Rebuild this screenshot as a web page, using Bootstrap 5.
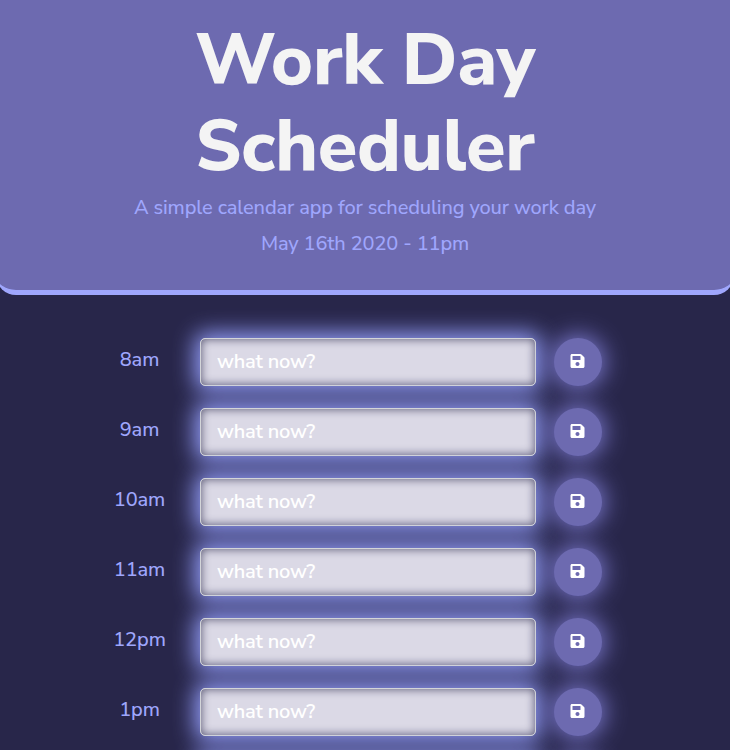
<!DOCTYPE html>
<html lang="en">
<head>
<meta charset="utf-8">
<meta name="viewport" content="width=device-width, initial-scale=1">
<title>Work Day Scheduler</title>
<link href="https://cdn.jsdelivr.net/npm/bootstrap@5.3.0/dist/css/bootstrap.min.css" rel="stylesheet">
<style>
html{overflow:hidden}
body{background:#28264a;font-family:"Nunito Sans",Nunito,Lato,sans-serif;font-size:20px;font-weight:500;color:#9fa6fd;overflow:hidden;height:750px}
.page-head{background:#6d6ab0;border-bottom:5px solid #9fa6fd;border-radius:0 0 20px 20px;height:295px;margin:0 -4px 43px;padding-top:17px}
.page-head h1{font-size:72px;font-weight:800;line-height:86px;letter-spacing:-.3px;color:#f4f4f4;margin-bottom:4px}
.page-head p{line-height:30px;margin-bottom:6px;letter-spacing:-.14px}
.slots{width:522px;height:412px;margin-left:80px;gap:22px}
.hour{width:119px;margin-right:1px;line-height:30px;padding-bottom:4px;letter-spacing:-.1px}
.slots .task{width:336px;height:48px;padding:5px 16px 7px;font-size:20px;color:#fff;background:#dbd9e6;border:1px solid #d3d5d9;border-radius:5px;box-shadow:0 0 22px 5px #949efa,inset 0 0 10px #55536f}
.slots .task::placeholder{color:#fff;opacity:1;font-weight:600;letter-spacing:-.2px}
.save{width:48px;height:48px;margin-left:18px;background:#6d6ab0;box-shadow:0 0 25px 2px #8482dc}
.save svg{width:15px;height:16px;margin-right:1px;margin-top:-2px}
</style>
</head>
<body>
<header class="page-head text-center">
<h1>Work Day<br>Scheduler</h1>
<p>A simple calendar app for scheduling your work day</p>
<p>May 16th 2020 - 11pm</p>
</header>
<svg class="d-none"><symbol id="disk" viewBox="0 0 448 512"><path fill="#fff" d="M433.941 129.941l-83.882-83.882A48 48 0 0 0 316.118 32H48C21.49 32 0 53.49 0 80v352c0 26.51 21.49 48 48 48h352c26.51 0 48-21.49 48-48V163.882a48 48 0 0 0-14.059-33.941zM224 416c-35.346 0-64-28.654-64-64 0-35.346 28.654-64 64-64s64 28.654 64 64c0 35.346-28.654 64-64 64zm96-304.52V212c0 6.627-5.373 12-12 12H76c-6.627 0-12-5.373-12-12V108c0-6.627 5.373-12 12-12h228.52c3.183 0 6.235 1.264 8.485 3.515l3.48 3.48A11.996 11.996 0 0 1 320 111.48z"/></symbol></svg>
<main class="slots d-flex flex-column">
<div class="d-flex align-items-center"><div class="hour text-center">8am</div><input class="form-control task" placeholder="what now?"><button class="save btn border-0 p-0 rounded-circle d-flex align-items-center justify-content-center" aria-label="Save"><svg><use href="#disk"/></svg></button></div>
<div class="d-flex align-items-center"><div class="hour text-center">9am</div><input class="form-control task" placeholder="what now?"><button class="save btn border-0 p-0 rounded-circle d-flex align-items-center justify-content-center" aria-label="Save"><svg><use href="#disk"/></svg></button></div>
<div class="d-flex align-items-center"><div class="hour text-center">10am</div><input class="form-control task" placeholder="what now?"><button class="save btn border-0 p-0 rounded-circle d-flex align-items-center justify-content-center" aria-label="Save"><svg><use href="#disk"/></svg></button></div>
<div class="d-flex align-items-center"><div class="hour text-center">11am</div><input class="form-control task" placeholder="what now?"><button class="save btn border-0 p-0 rounded-circle d-flex align-items-center justify-content-center" aria-label="Save"><svg><use href="#disk"/></svg></button></div>
<div class="d-flex align-items-center"><div class="hour text-center">12pm</div><input class="form-control task" placeholder="what now?"><button class="save btn border-0 p-0 rounded-circle d-flex align-items-center justify-content-center" aria-label="Save"><svg><use href="#disk"/></svg></button></div>
<div class="d-flex align-items-center"><div class="hour text-center">1pm</div><input class="form-control task" placeholder="what now?"><button class="save btn border-0 p-0 rounded-circle d-flex align-items-center justify-content-center" aria-label="Save"><svg><use href="#disk"/></svg></button></div>
<div class="d-flex align-items-center"><div class="hour"></div><input class="form-control task"><button class="save btn border-0 p-0 rounded-circle" aria-label="Save"></button></div>
</main>
<script src="https://cdn.jsdelivr.net/npm/bootstrap@5.3.0/dist/js/bootstrap.bundle.min.js"></script>
</body>
</html>
